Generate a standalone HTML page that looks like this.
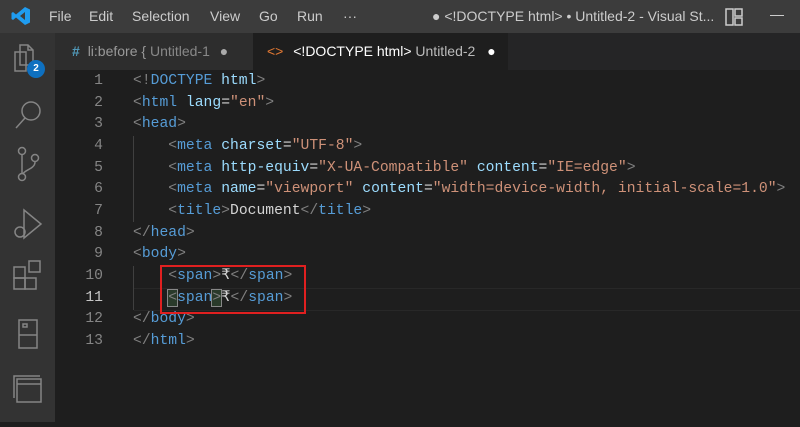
<!DOCTYPE html>
<html><head><style>
body{margin:0;width:800px;height:422px;background:#1e1e1e;overflow:hidden;font-family:"Liberation Sans",sans-serif;position:relative}
.title{position:absolute;left:0;top:0;width:800px;height:33px;background:#3c3c3c;color:#ccc;font-size:14px}
.title span{position:absolute;top:8px}
.act{position:absolute;left:0;top:33px;width:55px;height:389px;background:#333}
.tabs{position:absolute;left:55px;top:33px;width:745px;height:37px;background:#252526}
.tab{position:absolute;top:0;height:37px;font-size:14px;line-height:37px}
.code{position:absolute;left:0;top:71px;font-family:"Liberation Mono",monospace;font-size:14.7px;line-height:21.67px;color:#d4d4d4}
.ln{position:absolute;left:60px;width:43px;text-align:right;color:#858585}
.tx{position:absolute;left:133px;top:0;white-space:pre}
.t{color:#808080}.n{color:#569cd6}.a{color:#9cdcfe}.s{color:#ce9178}
</style></head><body>
<div class="title">
<svg style="position:absolute;left:11px;top:6px" width="20" height="20" viewBox="0 0 20 20"><path d="M14 1 L19 3.5 V16.5 L14 19 L5 11.5 L2 14 L0.5 13 V7 L2 6 L5 8.5Z M14 6 L9 10 L14 14Z" fill="#1f9cf0" fill-rule="evenodd"/></svg>
<span style="left:49px">File</span><span style="left:89px">Edit</span><span style="left:132px">Selection</span><span style="left:210px">View</span><span style="left:259px">Go</span><span style="left:297px">Run</span><span style="left:343px">···</span>
<span style="left:432px">● &lt;!DOCTYPE html&gt; • Untitled-2 - Visual St...</span>
<svg style="position:absolute;left:724px;top:7px" width="20" height="20" viewBox="0 0 20 20" fill="none" stroke="#ccc" stroke-width="1.5"><rect x="2" y="2" width="7" height="16"/><rect x="11" y="2" width="7" height="7"/><rect x="11" y="11" width="7" height="7"/></svg>
<div style="position:absolute;left:770px;top:15px;width:14px;height:1px;background:#ccc"></div>
</div>
<div class="act">
<svg width="55" height="389" fill="none" stroke="#858585" stroke-width="1.5">
<path d="M20 12h8l5 5v15H20z M28 12v5h5"/><rect x="15" y="19" width="11" height="19"/>
<circle cx="31" cy="78" r="9"/><path d="M25 85l-9 10"/>
<circle cx="22" cy="118" r="3.5"/><circle cx="22" cy="144" r="3.5"/><circle cx="35" cy="125" r="3.5"/><path d="M22 122v18 M35 129c0 7-11 8-12 12"/>
<path d="M24 177v28l17-14z"/><circle cx="20" cy="199" r="5"/>
<rect x="14" y="245" width="11" height="11"/><rect x="25" y="245" width="11" height="11"/><rect x="14" y="234" width="11" height="11"/><rect x="29" y="228" width="11" height="11"/>
<rect x="19" y="287" width="18" height="28"/><path d="M19 302h18"/><rect x="23" y="291" width="4" height="3"/>
<path d="M14 365v-22h26"/><rect x="17" y="346" width="24" height="23"/><path d="M17 351h24"/>
</svg>
<div style="position:absolute;left:27px;top:27px;width:18px;height:18px;border-radius:50%;background:#0e70c0;color:#fff;font-size:10px;font-weight:bold;text-align:center;line-height:18px">2</div>
</div>
<div class="tabs">
<div class="tab" style="left:0;width:198px;background:#2d2d2d;color:#999"><span style="margin-left:17px;color:#519aba;font-weight:bold">#</span> <span style="margin-left:4px">li:before {</span> <span style="color:#888">Untitled-1</span> <span style="margin-left:6px;color:#aaa">●</span></div>
<div class="tab" style="left:198px;width:255px;background:#1e1e1e;color:#fff"><span style="margin-left:14px;color:#e37933">&lt;&gt;</span> <span style="margin-left:6px">&lt;!DOCTYPE html&gt;</span> <span style="color:#bbb">Untitled-2</span> <span style="margin-left:8px">●</span></div>
</div>
<div style="position:absolute;left:133px;top:136px;width:1px;height:86px;background:#404040"></div>
<div style="position:absolute;left:133px;top:266px;width:1px;height:44px;background:#404040"></div>
<div style="position:absolute;left:134px;top:288px;width:666px;height:21px;border-top:1px solid #282828;border-bottom:1px solid #282828"></div>
<div class="code">
<div class="ln" style="top:0">1</div><div class="ln" style="top:21.67px">2</div><div class="ln" style="top:43.3px">3</div><div class="ln" style="top:65px">4</div><div class="ln" style="top:86.7px">5</div><div class="ln" style="top:108.3px">6</div><div class="ln" style="top:130px">7</div><div class="ln" style="top:151.7px">8</div><div class="ln" style="top:173.3px">9</div><div class="ln" style="top:195px">10</div><div class="ln" style="top:216.7px;color:#c6c6c6">11</div><div class="ln" style="top:238.3px">12</div><div class="ln" style="top:260px">13</div>
<div class="tx"><span class="t">&lt;!</span><span class="n">DOCTYPE</span> <span class="a">html</span><span class="t">&gt;</span>
<span class="t">&lt;</span><span class="n">html</span> <span class="a">lang</span>=<span class="s">"en"</span><span class="t">&gt;</span>
<span class="t">&lt;</span><span class="n">head</span><span class="t">&gt;</span>
    <span class="t">&lt;</span><span class="n">meta</span> <span class="a">charset</span>=<span class="s">"UTF-8"</span><span class="t">&gt;</span>
    <span class="t">&lt;</span><span class="n">meta</span> <span class="a">http-equiv</span>=<span class="s">"X-UA-Compatible"</span> <span class="a">content</span>=<span class="s">"IE=edge"</span><span class="t">&gt;</span>
    <span class="t">&lt;</span><span class="n">meta</span> <span class="a">name</span>=<span class="s">"viewport"</span> <span class="a">content</span>=<span class="s">"width=device-width, initial-scale=1.0"</span><span class="t">&gt;</span>
    <span class="t">&lt;</span><span class="n">title</span><span class="t">&gt;</span>Document<span class="t">&lt;/</span><span class="n">title</span><span class="t">&gt;</span>
<span class="t">&lt;/</span><span class="n">head</span><span class="t">&gt;</span>
<span class="t">&lt;</span><span class="n">body</span><span class="t">&gt;</span>
    <span class="t">&lt;</span><span class="n">span</span><span class="t">&gt;</span>₹<span class="t">&lt;/</span><span class="n">span</span><span class="t">&gt;</span>
    <span class="t" style="outline:1px solid #888;background:#2a3a2a">&lt;</span><span class="n">span</span><span class="t" style="outline:1px solid #888;background:#2a3a2a">&gt;</span>₹<span class="t">&lt;/</span><span class="n">span</span><span class="t">&gt;</span>
<span class="t">&lt;/</span><span class="n">body</span><span class="t">&gt;</span>
<span class="t">&lt;/</span><span class="n">html</span><span class="t">&gt;</span></div>
</div>
<div style="position:absolute;left:160px;top:265px;width:142px;height:45px;border:2px solid #e02020"></div>
</body></html>
